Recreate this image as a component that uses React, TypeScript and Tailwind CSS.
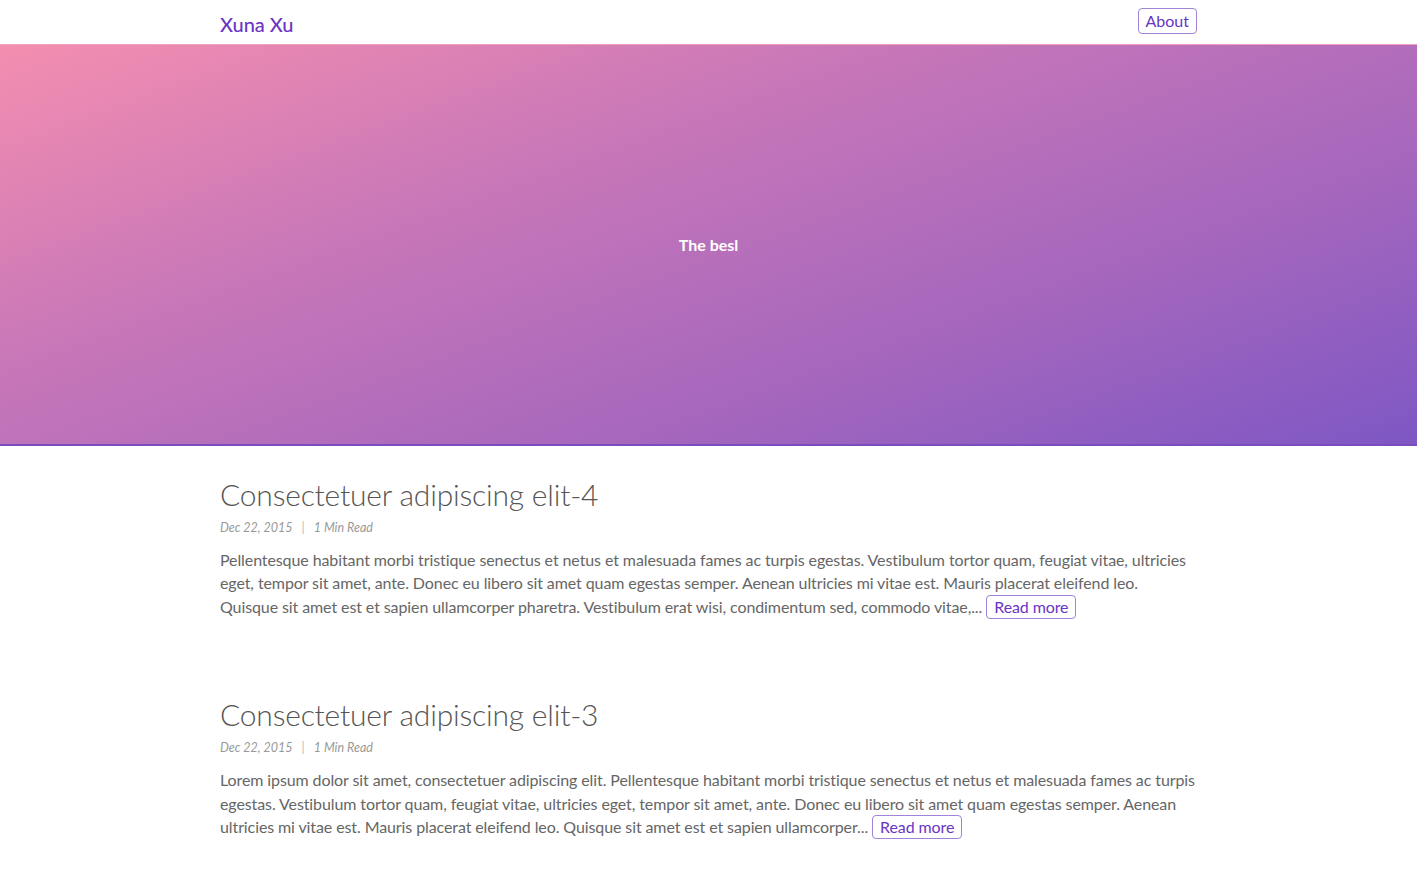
import React from "react";

const posts = [
  {
    title: "Consectetuer adipiscing elit-4",
    date: "Dec 22, 2015",
    read: "1 Min Read",
    excerpt:
      "Pellentesque habitant morbi tristique senectus et netus et malesuada fames ac turpis egestas. Vestibulum tortor quam, feugiat vitae, ultricies eget, tempor sit amet, ante. Donec eu libero sit amet quam egestas semper. Aenean ultricies mi vitae est. Mauris placerat eleifend leo. Quisque sit amet est et sapien ullamcorper pharetra. Vestibulum erat wisi, condimentum sed, commodo vitae,...",
  },
  {
    title: "Consectetuer adipiscing elit-3",
    date: "Dec 22, 2015",
    read: "1 Min Read",
    excerpt:
      "Lorem ipsum dolor sit amet, consectetuer adipiscing elit. Pellentesque habitant morbi tristique senectus et netus et malesuada fames ac turpis egestas. Vestibulum tortor quam, feugiat vitae, ultricies eget, tempor sit amet, ante. Donec eu libero sit amet quam egestas semper. Aenean ultricies mi vitae est. Mauris placerat eleifend leo. Quisque sit amet est et sapien ullamcorper...",
  },
];

export default function App() {
  return (
    <div className="min-h-screen bg-white font-['Lato',sans-serif] text-[#555]">
      {/* Header */}
      <header className="h-[44px] bg-white">
        <div className="w-[977px] mx-auto h-full flex items-center justify-between">
          <a className="text-[20px] font-medium text-[#6a35c4] pt-[4px]">Xuna Xu</a>
          <button className="px-[7px] h-[26px] mt-[-2px] border border-[#9f84d9] rounded-[4px] text-[16px] text-[#6a35c4] leading-none">
            About
          </button>
        </div>
      </header>

      {/* Hero */}
      <section className="h-[402px] bg-[linear-gradient(160deg,#f48eb0_0%,#c877b8_35%,#a466bd_70%,#7e57c4_100%)] border-t border-[#f0a0bc] border-b-2 border-b-[#7a4cc0] flex items-center justify-center">
        <p className="text-white text-[16px] font-bold">The besl</p>
      </section>

      {/* Posts */}
      <main className="w-[977px] mx-auto pt-[28px]">
        {posts.map((p) => (
          <article key={p.title} className="mb-[75px]">
            <h2 className="text-[30px] font-light text-[#555] leading-[40px] tracking-[-0.2px]">{p.title}</h2>
            <div className="mt-[5px] text-[12.5px] italic text-[#999] flex items-center gap-[9px]">
              <span>{p.date}</span>
              <span className="text-[#bbb] not-italic">|</span>
              <span>{p.read}</span>
            </div>
            <p className="mt-[10px] text-[16px] leading-[23.7px] tracking-[-0.1px] text-[#666]">
              {p.excerpt}{" "}
              <a className="inline-block px-[7px] leading-[22px] border border-[#9f84d9] rounded-[4px] text-[#6a35c4]">
                Read more
              </a>
            </p>
          </article>
        ))}
      </main>
    </div>
  );
}
